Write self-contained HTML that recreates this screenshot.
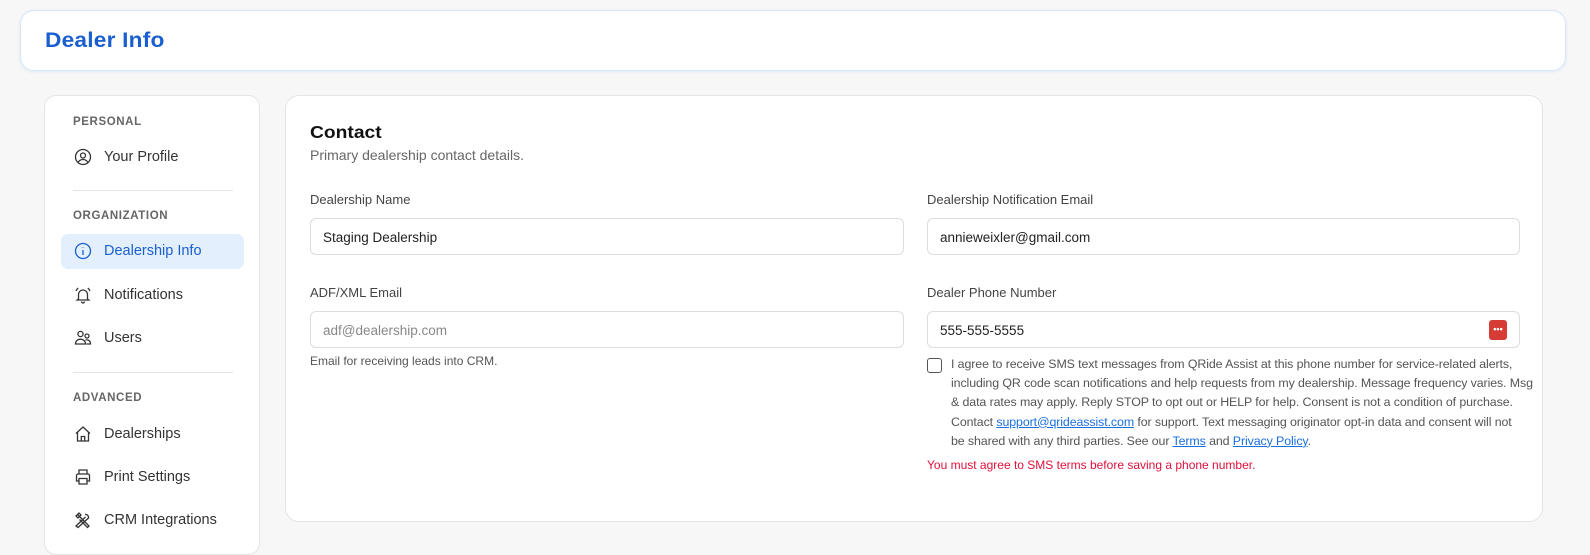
<!DOCTYPE html>
<html><head><meta charset="utf-8"><style>
*{box-sizing:border-box;margin:0;padding:0}
body{width:1590px;height:541px;background:#f7f7f7;font-family:"Liberation Sans",sans-serif;position:relative;overflow:hidden;color:#333}
.hdr{position:absolute;left:20px;top:10px;width:1546px;height:61px;background:#fff;border:1px solid #d6e6fb;border-radius:14px;box-shadow:0 1px 3px rgba(60,120,220,.12)}
.hdr h1{position:absolute;left:24px;top:18px;font-size:21px;font-weight:bold;color:#1a5fd0;letter-spacing:0.2px;transform:scaleX(1.08);transform-origin:left}
.side{position:absolute;left:44px;top:95px;width:216px;height:460px;background:#fff;border:1px solid #e4e4e4;border-radius:12px}
.sec{position:absolute;left:28px;font-size:11.5px;font-weight:bold;color:#666;letter-spacing:0.6px}
.item{position:absolute;left:16px;width:183px;height:35px;border-radius:7px;font-size:14.5px;color:#333}
.item span{position:absolute;left:43px;top:9px}
.item svg{position:absolute;left:13px;top:8px}
.item.act{background:#e3effc;color:#1a5fd0}
.div{position:absolute;left:28px;width:160px;height:1px;background:#e4e4e4}
.main{position:absolute;left:285px;top:95px;width:1258px;height:427px;background:#fff;border:1px solid #e4e4e4;border-radius:14px}
.t{position:absolute;font-size:13px;color:#444}
.inp{position:absolute;height:37px;border:1px solid #ddd;border-radius:6px;font-size:13.5px;color:#222;padding:11px 12px}
.sms{position:absolute;left:665px;top:259px;font-size:12.4px;line-height:19.2px;color:#555;white-space:nowrap;letter-spacing:-0.1px}
.sms a{color:#1a6fe0;text-decoration:underline}
</style></head><body>
<div class="hdr"><h1>Dealer Info</h1></div>
<div class="side">
<div class="sec" style="top:20px">PERSONAL</div>
<div class="item" style="top:44px"><svg width="18" height="18" viewBox="0 0 18 18" fill="none" stroke="#333" stroke-width="1.3"><circle cx="9" cy="9" r="7.5"/><circle cx="9" cy="7.5" r="2.5"/><path d="M4.2 14.3c1.2-2 2.8-2.8 4.8-2.8s3.6.8 4.8 2.8"/></svg><span>Your Profile</span></div>
<div class="div" style="top:94px"></div>
<div class="sec" style="top:114px">ORGANIZATION</div>
<div class="item act" style="top:138px"><svg width="18" height="18" viewBox="0 0 18 18" fill="none" stroke="#1a5fd0" stroke-width="1.3"><circle cx="9" cy="9" r="7.5"/><path d="M9 8v5M9 5.3v.6"/></svg><span>Dealership Info</span></div>
<div class="item" style="top:182px"><svg width="18" height="18" viewBox="0 0 18 18" fill="none" stroke="#333" stroke-width="1.3"><path d="M4.5 13V8.5a4.5 4.5 0 0 1 9 0V13l1.3 1H3.2z"/><path d="M7.5 15.5a1.5 1.5 0 0 0 3 0M2 5c.5-1.3 1.3-2.3 2.3-3M16 5c-.5-1.3-1.3-2.3-2.3-3"/></svg><span>Notifications</span></div>
<div class="item" style="top:225px"><svg width="18" height="18" viewBox="0 0 18 18" fill="none" stroke="#333" stroke-width="1.3"><circle cx="6.5" cy="5" r="2.6"/><circle cx="13" cy="7" r="2"/><path d="M1.5 15c0-3 2.2-4.8 5-4.8s5 1.8 5 4.8zM11.5 11c2.8-.6 5 .8 5 4h-4"/></svg><span>Users</span></div>
<div class="div" style="top:276px"></div>
<div class="sec" style="top:296px">ADVANCED</div>
<div class="item" style="top:321px"><svg width="18" height="18" viewBox="0 0 18 18" fill="none" stroke="#333" stroke-width="1.3"><path d="M2 8.5L9 2l7 6.5M3.5 7.2V16h11V7.2M7.3 16v-4.5h3.4V16"/></svg><span>Dealerships</span></div>
<div class="item" style="top:364px"><svg width="18" height="18" viewBox="0 0 18 18" fill="none" stroke="#333" stroke-width="1.3"><path d="M5 6V2h8v4M5 13H2.5V7.5a1.5 1.5 0 0 1 1.5-1.5h10a1.5 1.5 0 0 1 1.5 1.5V13H13M5 10.5h8V16H5z"/></svg><span>Print Settings</span></div>
<div class="item" style="top:407px"><svg width="18" height="18" viewBox="0 0 18 18" fill="none" stroke="#333" stroke-width="1.3"><path d="M3 3l4 4M2 5l3-3 2 2-3 3zM7 7l8 8-1.5 1.5-8-8M11 3.5a3 3 0 0 1 3.5 3.5L4 16.5 2 15 11.5 6"/></svg><span>CRM Integrations</span></div>
</div>
<div class="main">
<div style="position:absolute;left:24px;top:26px;font-size:17.5px;font-weight:bold;color:#111;transform:scaleX(1.1);transform-origin:left">Contact</div>
<div class="t" style="left:24px;top:51px;font-size:14px;color:#666">Primary dealership contact details.</div>
<div class="t" style="left:24px;top:96px">Dealership Name</div>
<div class="inp" style="left:24px;top:122px;width:594px">Staging Dealership</div>
<div class="t" style="left:24px;top:189px">ADF/XML Email</div>
<div class="inp" style="left:24px;top:215px;width:594px;color:#888">adf@dealership.com</div>
<div class="t" style="left:24px;top:258px;font-size:12px;color:#555">Email for receiving leads into CRM.</div>
<div class="t" style="left:641px;top:96px">Dealership Notification Email</div>
<div class="inp" style="left:641px;top:122px;width:593px">annieweixler@gmail.com</div>
<div class="t" style="left:641px;top:189px">Dealer Phone Number</div>
<div class="inp" style="left:641px;top:215px;width:593px">555-555-5555<div style="position:absolute;right:12px;top:8px;width:18px;height:20px;background:#d63c35;border-radius:3px;color:#fff;font-size:9px;line-height:19px;text-align:center;font-weight:bold">•••</div></div>
<div style="position:absolute;left:641px;top:262px;width:15px;height:15px;border:1.3px solid #555;border-radius:3px"></div>
<div class="sms">I agree to receive SMS text messages from QRide Assist at this phone number for service-related alerts,<br>including QR code scan notifications and help requests from my dealership. Message frequency varies. Msg<br>&amp; data rates may apply. Reply STOP to opt out or HELP for help. Consent is not a condition of purchase.<br>Contact <a>support@qrideassist.com</a> for support. Text messaging originator opt-in data and consent will not<br>be shared with any third parties. See our <a>Terms</a> and <a>Privacy Policy</a>.</div>
<div class="t" style="left:641px;top:362px;font-size:12px;color:#e0103c">You must agree to SMS terms before saving a phone number.</div>
</div>
</body></html>
